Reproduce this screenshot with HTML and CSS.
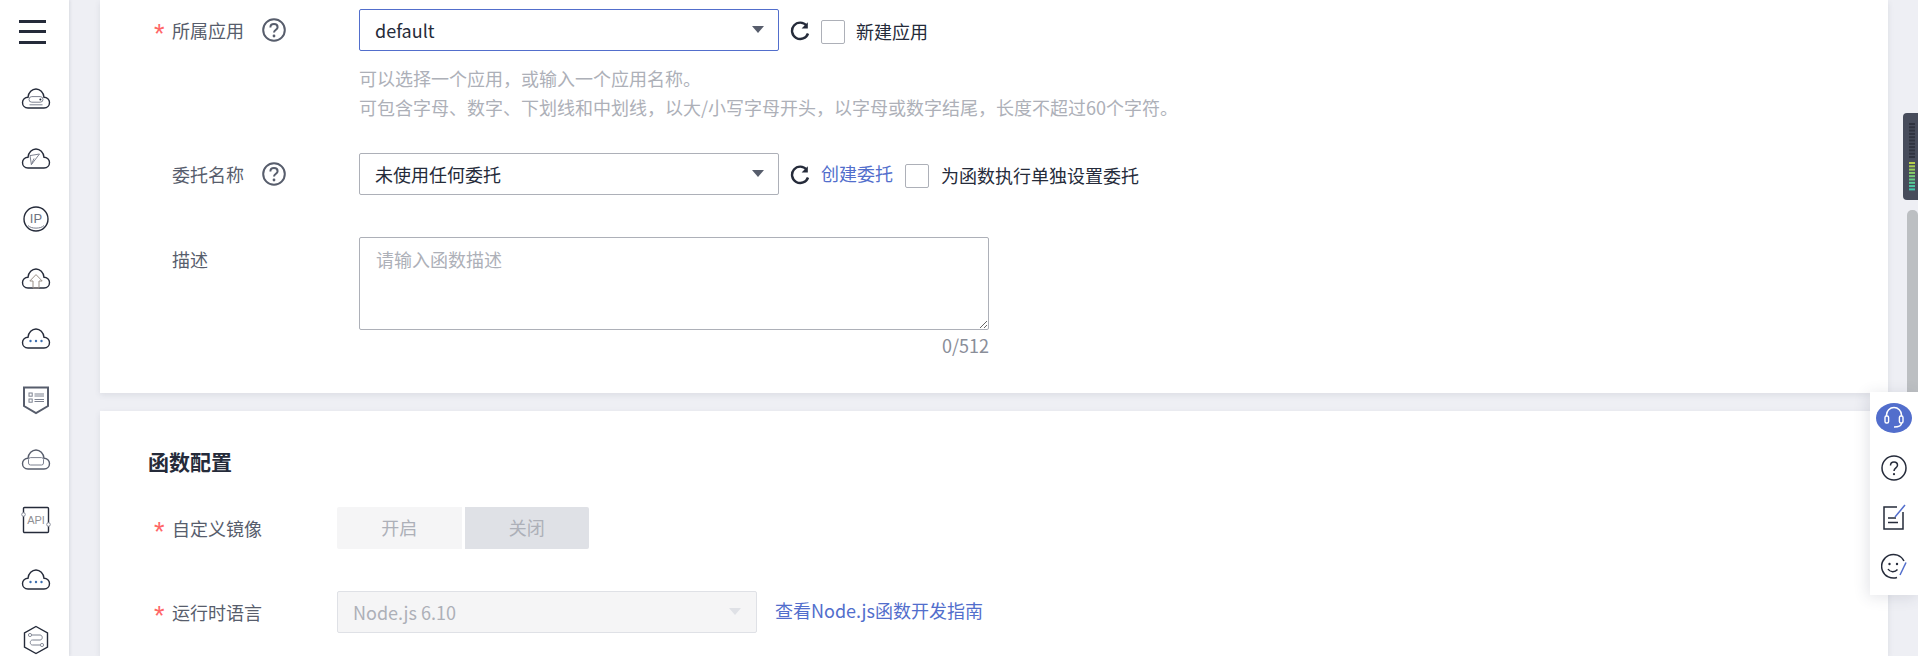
FILE: index.html
```html
<!DOCTYPE html>
<html lang="zh-CN">
<head>
<meta charset="utf-8">
<title>创建函数</title>
<link rel="stylesheet" href="styles.css">
</head>
<body>
<svg class="defs" width="0" height="0" aria-hidden="true">
  <defs>
    <path id="cloud" d="M8 21H24C27.5 21 29.5 18.5 29.5 15.5C29.5 12.5 27 10.2 24 10.2C23.5 5.5 20 2 16 2C12 2 8.5 5.5 8 10.2C5 10.2 2.5 12.5 2.5 15.5C2.5 18.5 4.5 21 8 21Z"/>
    <g id="refresh"><path d="M16.6 4.6A8.2 8.2 0 1 0 18 12.5" fill="none" stroke="#252b3a" stroke-width="2.4"/><path d="M17.8 1.2V7.4H11.6Z" fill="#252b3a"/></g>
    <g id="help"><circle cx="12" cy="12" r="10.8" fill="none" stroke="#575d6c" stroke-width="2"/><path d="M8.4 9.4C8.4 7.2 10 6 12 6C14 6 15.6 7.2 15.6 9.2C15.6 11.6 12 11.8 12 14.6" fill="none" stroke="#575d6c" stroke-width="2"/><circle cx="12" cy="18" r="1.4" fill="#575d6c"/></g>
  </defs>
</svg>
<aside class="sidebar">
  <div class="burger"><span></span><span></span><span></span></div>
  <div class="nav-divider"></div>
  <div class="nav-icon"><svg viewBox="0 0 32 24" width="32" height="24" class="ico"><use href="#cloud"/><rect x="9" y="9.6" width="14" height="5.6" rx="2.8" class="thin"/><circle cx="20.4" cy="12.4" r="1" class="dot"/><path d="M9.5 17.8H22.5" class="thin"/></svg></div>
  <div class="nav-icon"><svg viewBox="0 0 32 24" width="32" height="24" class="ico"><use href="#cloud"/><path d="M10 8.6L19.5 7L11.4 17.6Z" class="thin"/><path d="M11.4 17.6L14 11.5" class="thin"/></svg></div>
  <div class="nav-icon"><svg viewBox="0 0 32 28" width="32" height="28" class="ico"><circle cx="16" cy="14" r="12"/><text x="16" y="18" class="ip">IP</text><path d="M8 20.5C11 24 21 24 24 20.5" class="thin"/></svg></div>
  <div class="nav-icon"><svg viewBox="0 0 32 24" width="32" height="24" class="ico"><use href="#cloud"/><path d="M16 7.6L22.2 14H19V21H13V14H9.8Z" class="orange"/></svg></div>
  <div class="nav-icon"><svg viewBox="0 0 32 24" width="32" height="24" class="ico"><use href="#cloud"/><circle cx="10.5" cy="14" r="1.2" class="blue-dot"/><circle cx="16" cy="14" r="1.2" class="blue-dot"/><circle cx="21.5" cy="14" r="1.2" class="blue-dot"/></svg></div>
  <div class="nav-icon"><svg viewBox="0 0 32 30" width="32" height="30" class="ico"><path d="M4 2.5H28V21L16 28L4 21Z" stroke-width="2" stroke="#575d6c"/><rect x="9" y="8" width="3.2" height="3.2" class="thin"/><rect x="9" y="14" width="3.2" height="3.2" class="thin"/><path d="M14.5 9H24M14.5 11H24" class="thin"/><path d="M14.5 14.5H24M14.5 16.5H24" class="thin"/></svg></div>
  <div class="nav-icon"><svg viewBox="0 0 32 24" width="32" height="24" class="ico gray"><use href="#cloud"/><rect x="8.5" y="9.6" width="15" height="7.4" rx="2" class="thin"/></svg></div>
  <div class="nav-icon"><svg viewBox="0 0 32 30" width="32" height="30" class="ico"><rect x="3.5" y="2.5" width="25" height="25" rx="1"/><text x="16" y="19" class="api">API</text><circle cx="3.5" cy="9.5" r="1.8" class="node"/><circle cx="28.5" cy="19.5" r="1.8" class="node"/></svg></div>
  <div class="nav-icon"><svg viewBox="0 0 32 24" width="32" height="24" class="ico"><use href="#cloud"/><circle cx="10.5" cy="14" r="1.2" class="blue-dot"/><circle cx="16" cy="14" r="1.2" class="blue-dot"/><circle cx="21.5" cy="14" r="1.2" class="blue-dot"/></svg></div>
  <div class="nav-icon"><svg viewBox="0 0 32 30" width="32" height="30" class="ico"><path d="M16 1.5L27.5 8V22L16 28.5L4.500 22V8Z"/><path d="M11 10H20C23 10 23 15 20 15H12.500C9.500 15 9.500 20 12.500 20H21" class="thin"/><circle cx="10" cy="10" r="1.6" class="node"/><circle cx="22" cy="20" r="1.6" class="node"/></svg></div>
</aside>

<main class="content">
  <section class="card card-basic">
    <div class="row">
      <div class="label"><span class="req">*</span><span class="label-text">所属应用</span><svg class="help" viewBox="0 0 24 24" width="24" height="24"><use href="#help"/></svg></div>
      <div class="select select-focus"><span>default</span><i class="caret"></i></div>
      <svg class="refresh" viewBox="0 0 20 20" width="20" height="20"><use href="#refresh"/></svg>
      <span class="check"></span>
      <span class="check-text">新建应用</span>
    </div>
    <div class="hints">
      <div>可以选择一个应用，或输入一个应用名称。</div>
      <div>可包含字母、数字、下划线和中划线，以大/小写字母开头，以字母或数字结尾，长度不超过60个字符。</div>
    </div>
    <div class="row row-agency">
      <div class="label"><span class="req"></span><span class="label-text">委托名称</span><svg class="help" viewBox="0 0 24 24" width="24" height="24"><use href="#help"/></svg></div>
      <div class="select"><span>未使用任何委托</span><i class="caret"></i></div>
      <svg class="refresh" viewBox="0 0 20 20" width="20" height="20"><use href="#refresh"/></svg>
      <a class="link link-create">创建委托</a>
      <span class="check"></span>
      <span class="check-text check-text-wide">为函数执行单独设置委托</span>
    </div>
    <div class="row row-desc">
      <div class="label label-top"><span class="req"></span><span class="label-text">描述</span></div>
      <div class="desc-box">
        <textarea class="textarea" placeholder="请输入函数描述"></textarea>
        <div class="counter">0/512</div>
      </div>
    </div>
  </section>

  <section class="card card-config">
    <h2 class="title">函数配置</h2>
    <div class="row row-toggle">
      <div class="label label-narrow"><span class="req">*</span><span class="label-text">自定义镜像</span></div>
      <div class="toggle"><span class="toggle-off">开启</span><span class="toggle-on">关闭</span></div>
    </div>
    <div class="row row-runtime">
      <div class="label label-narrow"><span class="req">*</span><span class="label-text">运行时语言</span></div>
      <div class="select select-disabled"><span>Node.js 6.10</span><i class="caret"></i></div>
      <a class="link link-guide">查看Node.js函数开发指南</a>
    </div>
  </section>
</main>

<div class="scroll-thumb"></div>
<svg class="meter" viewBox="0 0 15 87" width="15" height="87">
  <path d="M15 0H4Q0 0 0 4V83Q0 87 4 87H15Z" fill="#474c5b"/>
  <g fill="#2f333f">
    <rect x="6" y="10" width="6" height="2"/><rect x="6" y="13.300" width="6" height="2"/><rect x="6" y="16.600" width="6" height="2"/><rect x="6" y="19.900" width="6" height="2"/><rect x="6" y="23.200" width="6" height="2"/><rect x="6" y="26.500" width="6" height="2"/><rect x="6" y="29.800" width="6" height="2"/><rect x="6" y="33.100" width="6" height="2"/><rect x="6" y="36.400" width="6" height="2"/><rect x="6" y="39.700" width="6" height="2"/><rect x="6" y="43" width="6" height="2"/>
  </g>
  <rect x="6" y="49" width="6" height="2" fill="#b6cf4c"/><rect x="6" y="52.300" width="6" height="2" fill="#a8cf52"/><rect x="6" y="55.600" width="6" height="2" fill="#98d05c"/><rect x="6" y="58.900" width="6" height="2" fill="#88d068"/><rect x="6" y="62.200" width="6" height="2" fill="#76cf78"/><rect x="6" y="65.500" width="6" height="2" fill="#66cd88"/><rect x="6" y="68.800" width="6" height="2" fill="#58cc96"/><rect x="6" y="72.100" width="6" height="2" fill="#4ccaa2"/><rect x="6" y="75.400" width="6" height="2" fill="#44c8ac"/>
</svg>

<div class="float-panel">
  <div class="float-item float-item-top"><span class="head-bg"><svg viewBox="0 0 36 30" width="36" height="30"><path d="M10.500 13V12A7.500 7.500 0 0 1 25.500 12V13" fill="none" stroke="#fff" stroke-width="1.500"/><rect x="9" y="13" width="3.600" height="7" rx="1.500" fill="none" stroke="#fff" stroke-width="1.400"/><rect x="23.400" y="13" width="3.600" height="7" rx="1.500" fill="none" stroke="#fff" stroke-width="1.400"/><path d="M25.500 20C25.500 23 23 24 18 24" fill="none" stroke="#fff" stroke-width="1.500"/></svg></span></div>
  <div class="float-item"><svg viewBox="0 0 26 26" width="26" height="26"><circle cx="13" cy="13" r="12" fill="none" stroke="#252b3a" stroke-width="1.500"/><path d="M9.500 10.500C9.500 8.300 11 7 13 7C15 7 16.500 8.300 16.500 10.300C16.500 12.800 13 13 13 16" fill="none" stroke="#252b3a" stroke-width="1.500"/><circle cx="13" cy="19.200" r="1.100" fill="#252b3a"/></svg></div>
  <div class="float-item"><svg viewBox="0 0 24 26" width="24" height="26"><path d="M21 8V25H2V3H15" fill="none" stroke="#252b3a" stroke-width="1.500"/><path d="M6 14H14M6 18.500H16" fill="none" stroke="#252b3a" stroke-width="1.500"/><path d="M13 13L23 1" fill="none" stroke="#526ecc" stroke-width="1.500"/></svg></div>
  <div class="float-item"><svg viewBox="0 0 26 26" width="26" height="26"><path d="M23 8A11.800 11.800 0 1 0 16 24.500" fill="none" stroke="#252b3a" stroke-width="1.500"/><circle cx="8.500" cy="11" r="1.200" fill="#252b3a"/><circle cx="16" cy="11" r="1.200" fill="#252b3a"/><path d="M7 16C9 19.500 14 19.500 16.500 16.500" fill="none" stroke="#252b3a" stroke-width="1.500"/><path d="M19 22L25 9.500" fill="none" stroke="#526ecc" stroke-width="1.500"/></svg></div>
</div>
</body>
</html>
```
FILE: styles.css
```css
* { box-sizing: border-box; }
html, body { margin: 0; height: 656px; overflow: hidden; }
body {
  display: flex;
  background: #eeeff4;
  font-family: "Noto Sans CJK SC", "Noto Sans", sans-serif;
  font-size: 18px;
  color: #252b3a;
}
.defs { position: absolute; }

/* sidebar */
.sidebar {
  width: 69px;
  flex: none;
  height: 656px;
  background: #fff;
  box-shadow: 1px 0 3px rgba(60, 65, 90, .12);
  display: flex;
  flex-direction: column;
  align-items: center;
}
.burger { display: flex; flex-direction: column; gap: 7.5px; width: 27px; margin: 19.5px 4px 0 0; }
.burger span { height: 3px; background: #252b3a; }
.nav-divider { width: 53px; height: 2px; background: #dfe1e6; margin: 25px 2px 0 0; }
.nav-icon { height: 60.2px; flex: none; display: flex; align-items: center; justify-content: center; padding-left: 3px; }
.ico { fill: none; stroke: #252b3a; stroke-width: 1.4; overflow: visible; }
.ico.gray { stroke: #575d6c; }
.ico .thin { stroke: #7d8290; stroke-width: 1; fill: none; }
.ico .dot { fill: #252b3a; stroke: none; }
.ico .orange { stroke: #9a8f86; stroke-width: 1; }
.ico .blue-dot { fill: #3d6fb0; stroke: none; }
.ico .node { fill: #fff; stroke: #8a8f9c; stroke-width: 1; }
.ico .ip { font: 13px "Liberation Sans", sans-serif; fill: #6f7482; stroke: none; text-anchor: middle; }
.ico .api { font: 11px "Liberation Sans", sans-serif; fill: #8f8f95; stroke: none; text-anchor: middle; }

/* main column */
.content { flex: 1; padding: 0 30px 0 31px; display: flex; flex-direction: column; gap: 18px; min-width: 0; }
.card { background: #fff; box-shadow: 0 2px 6px rgba(60, 65, 90, .1); flex: none; }
.card-basic { height: 393px; padding-top: 9px; }
.card-config { height: 245px; padding-top: 36px; }

.row { display: flex; align-items: flex-start; }
.label { width: 259px; flex: none; height: 42px; padding-left: 54px; display: flex; align-items: center; color: #575d6c; }
.label-narrow { width: 237px; }
.label-top { height: 45px; }
.req { width: 18px; flex: none; color: #f66; font: 27px/42px "Liberation Sans", sans-serif; height: 34px; }
.label-text { white-space: nowrap; line-height: 29px; }
.help { margin-left: 18px; flex: none; }

.select {
  width: 420px;
  height: 42px;
  flex: none;
  border: 1px solid #adb0b8;
  border-radius: 2px;
  background: #fff;
  padding: 0 40px 1px 15px;
  display: flex;
  align-items: center;
  justify-content: space-between;
  position: relative;
  white-space: nowrap;
}
.select-focus { border-color: #526ecc; }
.select-disabled { border-color: #dfe1e6; background: #f5f5f6; color: #adb0b8; }
.caret {
  position: absolute;
  right: 14px;
  top: 16px;
  width: 0;
  height: 0;
  border-left: 6.500px solid transparent;
  border-right: 6.500px solid transparent;
  border-top: 7.500px solid #575d6c;
}
.select-disabled .caret { border-top-color: #dfe1e6; right: 15px; top: 16px; border-left-width: 6px; border-right-width: 6px; }

.refresh { flex: none; margin: 11.500px 0 0 11px; }
.check { width: 24px; height: 24px; flex: none; margin: 11px 0 0 11px; border: 1px solid #adb0b8; border-radius: 2px; background: #fff; }
.check-text { margin: 8px 0 0 11px; line-height: 29px; white-space: nowrap; }
.check-text-wide { margin-left: 12px; }
.link { color: #526ecc; line-height: 29px; white-space: nowrap; }
.link-create { margin: 6px 0 0 11px; }
.link-create + .check { margin-left: 12px; }
.link-guide { margin: 5px 0 0 18px; }

.hints { margin: 13px 0 0 259px; color: #adb0b8; line-height: 29px; white-space: nowrap; }
.row-agency { margin-top: 31px; }
.row-desc { margin-top: 42px; }
.desc-box { width: 630px; flex: none; }
.textarea {
  display: block;
  width: 630px;
  height: 93px;
  border: 1px solid #adb0b8;
  border-radius: 2px;
  padding: 7px 16px;
  font: inherit;
  line-height: 29px;
  color: #252b3a;
  background: #fff;
  outline: none;
}
.textarea::placeholder { color: #adb0b8; opacity: 1; }
.counter { text-align: right; color: #8a8e99; line-height: 29px; margin-top: 1px; }

.title { margin: 0; font-size: 21px; line-height: 28px; font-weight: 700; color: #252b3a; padding-left: 48px; }
.row-toggle { margin-top: 32px; }
.row-runtime { margin-top: 42px; }
.toggle { display: flex; gap: 3px; height: 42px; flex: none; color: #adb0b8; }
.toggle span { width: 124.500px; display: flex; align-items: center; justify-content: center; padding-bottom: 2px; }
.toggle-off { background: #f5f5f6; border-radius: 2px 0 0 2px; }
.toggle-on { background: #dfe1e6; border-radius: 0 2px 2px 0; }

/* right edge overlays */
.scroll-thumb { position: absolute; left: 1907px; top: 210px; width: 11px; height: 190px; background: #bcbfc2; border-radius: 5px 5px 0 0; }
.meter { position: absolute; left: 1903px; top: 113px; }
.float-panel {
  position: absolute;
  left: 1870px;
  top: 392px;
  width: 48px;
  height: 203px;
  background: #fff;
  box-shadow: -2px 2px 14px rgba(60, 65, 90, .14);
  display: flex;
  flex-direction: column;
  align-items: center;
  padding-top: 11px;
}
.float-item { height: 49px; flex: none; display: flex; align-items: center; justify-content: center; width: 100%; }
.float-item-top { height: 30px; margin-bottom: 10px; }
.head-bg { width: 36px; height: 30px; border-radius: 50%; background: #526ecc; display: block; }
.head-bg svg { display: block; }
```
